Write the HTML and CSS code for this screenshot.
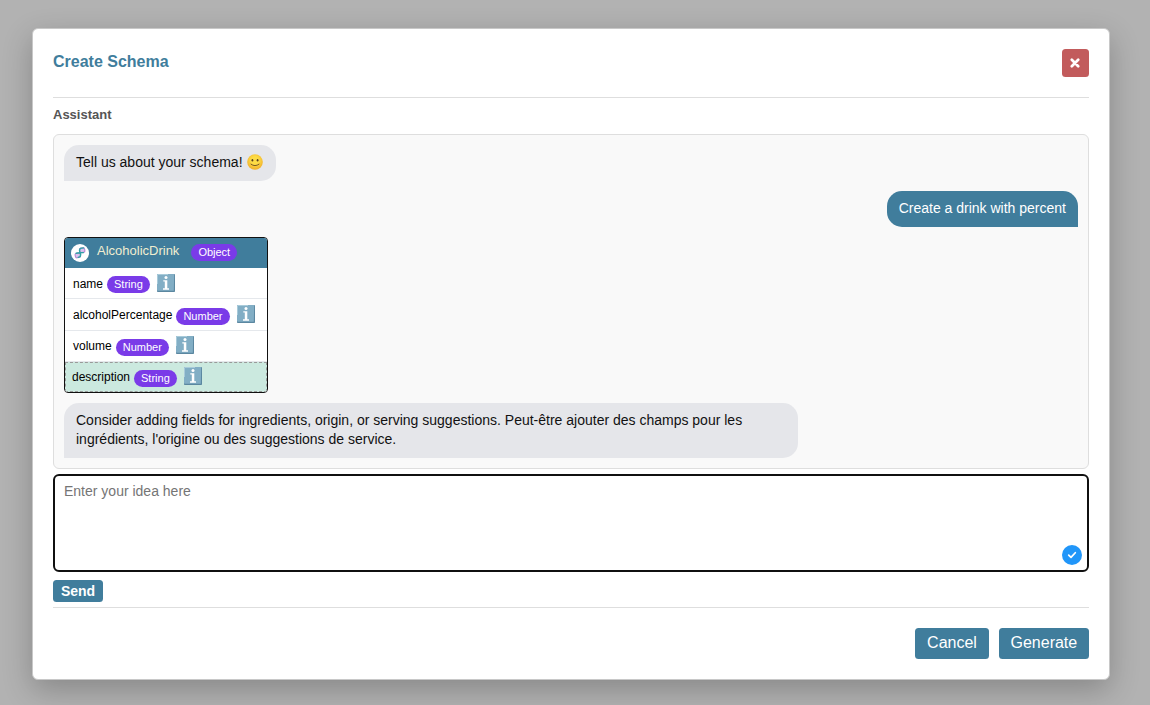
FILE: index.html
```html
<!DOCTYPE html>
<html lang="en">
<head>
<meta charset="utf-8">
<title>Create Schema</title>
<link rel="stylesheet" href="styles.css">
</head>
<body>
<svg class="defs" width="0" height="0">
  <symbol id="info" viewBox="0 0 18 18">
    <rect width="18" height="18" rx="0.8" fill="#5b87a0"/>
    <path d="M0 .8Q0 0 .8 0H17.2L16.8 16.8H.8Q0 16.8 0 16z" fill="#82aec5"/>
    <path d="M0.5 10V.5H11" stroke="#b4d2df" stroke-width=".8" fill="none"/>
    <circle cx="9" cy="3.4" r="1.5" fill="#fff"/>
    <path d="M6.3 6.2h4v8.1h1.7v1.4H6v-1.4h1.8V7.6H6.3z" fill="#fff"/>
  </symbol>
</svg>
<main class="modal">
  <header class="modal-header">
    <h1 class="title">Create Schema</h1>
    <button class="close" aria-label="Close">
      <svg width="11" height="10" viewBox="0 0 11 10"><path d="M1.8 1.8l6.4 6.4M8.2 1.8L1.8 8.2" stroke="#fff" stroke-width="2.7" stroke-linecap="round"/></svg>
    </button>
  </header>
  <h2 class="label">Assistant</h2>
  <section class="chat">
    <div class="bubble bot">Tell us about your schema!
      <svg class="smile" width="16" height="16" viewBox="0 0 16 16"><defs><radialGradient id="face" cx=".5" cy=".4" r=".6"><stop offset=".4" stop-color="#fddc45"/><stop offset="1" stop-color="#f0ae2c"/></radialGradient></defs><circle cx="8" cy="8" r="7.8" fill="url(#face)"/><ellipse cx="5.4" cy="6.2" rx=".9" ry="1.3" fill="#5a401f"/><ellipse cx="10.6" cy="6.2" rx=".9" ry="1.3" fill="#5a401f"/><path d="M4 10.2Q8 13.2 12 10.2" fill="none" stroke="#6b4c20" stroke-width=".9" stroke-linecap="round"/></svg>
    </div>
    <div class="bubble user">Create a drink with percent</div>
    <div class="schema">
      <div class="schema-head">
        <svg class="logo" width="18" height="18" viewBox="0 0 18 18"><circle cx="9" cy="9" r="9" fill="#fff"/><rect x="8.6" y="4" width="5.2" height="4.6" rx="1.6" transform="rotate(-10 11 6.5)" fill="#d9c3ee" stroke="#b78bd6" stroke-width="1.2"/><rect x="4.2" y="9" width="5.2" height="4.6" rx="1.6" transform="rotate(-10 7 11)" fill="#d9c3ee" stroke="#b78bd6" stroke-width="1.2"/><path d="M12.6 3.9L9.4 4.4 8.5 6 8.9 8.4 12.3 8.6M5.2 9.3L8.6 8.7 9.7 10.2 9.2 12.6 7.2 13.3" fill="none" stroke="#31a3a6" stroke-width="1.4" stroke-linecap="round" stroke-linejoin="round"/></svg>
        <span class="schema-name">AlcoholicDrink</span>
        <span class="tag">Object</span>
      </div>
      <div class="row"><span>name</span><span class="tag">String</span><svg class="info"><use href="#info"/></svg></div>
      <div class="row"><span>alcoholPercentage</span><span class="tag">Number</span><svg class="info"><use href="#info"/></svg></div>
      <div class="row"><span>volume</span><span class="tag">Number</span><svg class="info"><use href="#info"/></svg></div>
      <div class="row added"><span>description</span><span class="tag">String</span><svg class="info"><use href="#info"/></svg></div>
    </div>
    <div class="bubble bot">Consider adding fields for ingredients, origin, or serving suggestions. Peut-être ajouter des champs pour les ingrédients, l'origine ou des suggestions de service.</div>
  </section>
  <div class="prompt">
    <textarea class="idea" placeholder="Enter your idea here"></textarea>
    <svg class="check" width="20" height="20" viewBox="0 0 20 20"><circle cx="10" cy="10" r="10" fill="#2196f9"/><path d="M6.7 10.2l2.3 2.2 4.3-4.7" fill="none" stroke="#fff" stroke-width="1.7" stroke-linecap="round" stroke-linejoin="round"/></svg>
  </div>
  <button class="send">Send</button>
  <footer class="actions">
    <button class="action">Cancel</button>
    <button class="action">Generate</button>
  </footer>
</main>
</body>
</html>
```

FILE: styles.css
```css
* { box-sizing: border-box; }
body {
  margin: 0;
  height: 705px;
  overflow: hidden;
  padding: 28px 40px 25px 32px;
  background: #b2b2b2;
  font-family: "Liberation Sans", Arial, sans-serif;
}
.defs { display: block; height: 0; }
button { border: 0; padding: 0; font-family: inherit; color: #fff; background: #407d9c; border-radius: 3.5px; }
.modal {
  display: flex;
  flex-direction: column;
  height: 652px;
  padding: 20px;
  background: #fff;
  border: 1px solid #c8c8c8;
  border-radius: 6px;
  box-shadow: 0 10px 30px rgba(0, 0, 0, .24);
}
.modal-header {
  display: flex;
  justify-content: space-between;
  align-items: flex-start;
  height: 49px;
  border-bottom: 1px solid #dedede;
}
.title { margin: 3px 0 0; font-size: 16px; line-height: 20px; color: #407d9c; }
.close { display: flex; align-items: center; justify-content: center; width: 27px; height: 28px; background: #c25b5c; }
.label { margin: 9px 0 12px; font-size: 13px; line-height: 15px; color: #555; }
.chat {
  display: flex;
  flex-direction: column;
  align-items: flex-start;
  gap: 10px;
  height: 335px;
  padding: 10px;
  background: #f9f9f9;
  border: 1px solid #dedede;
  border-radius: 6px;
}
.bubble { max-width: 734px; padding: 8px 12px 9px; font-size: 14px; line-height: 19px; }
.bot { color: #111; background: #e5e6ea; border-radius: 15px 15px 15px 0; }
.user { align-self: flex-end; color: #fff; background: #407d9c; border-radius: 15px 15px 0 15px; }
.smile { margin: 0 .7px 0 .9px; vertical-align: -3px; }
.schema { width: 204px; height: 156px; overflow: hidden; border: 1px solid #111; border-radius: 4px; background: #fff; font-size: 12px; }
.schema-head { display: flex; align-items: center; height: 30px; padding-left: 6px; background: #407d9c; }
.schema-name { margin: -6px 12px 0 8px; font-size: 13px; color: #f0edd0; }
.tag { height: 17px; padding: 0 7px; border-radius: 9px; background: #7a3be8; color: #fff; font-size: 11px; line-height: 17px; }
.schema-head .tag { margin-top: -2px; }
.row { display: flex; align-items: center; height: 31.4px; padding: 1px 8px 0; border-bottom: 1px solid #e5e8ec; }
.row .tag { margin: 2px 7px 0 4px; }
.row.added { height: 30px; padding: 0 6px; background: #cbe9df; border: 1px dashed #999; }
.info { width: 18px; height: 18px; margin-top: -2px; }
.prompt { position: relative; height: 98px; margin-top: 5px; }
.idea {
  display: block;
  width: 100%;
  height: 98px;
  padding: 6px 9px;
  border: 2px solid #101010;
  border-radius: 6px;
  outline: 0;
  resize: none;
  font: 14px/19px "Liberation Sans", Arial, sans-serif;
}
.idea::placeholder { color: #757575; }
.check { position: absolute; right: 7px; bottom: 7px; }
.send { width: 50px; height: 22px; margin-top: 8px; font-size: 14px; font-weight: 700; line-height: 22px; }
.actions { display: flex; justify-content: flex-end; gap: 10px; margin-top: 5px; padding-top: 20px; border-top: 1px solid #dedede; }
.action { height: 31px; padding: 0 11.8px 2px; font-size: 16px; }
```
